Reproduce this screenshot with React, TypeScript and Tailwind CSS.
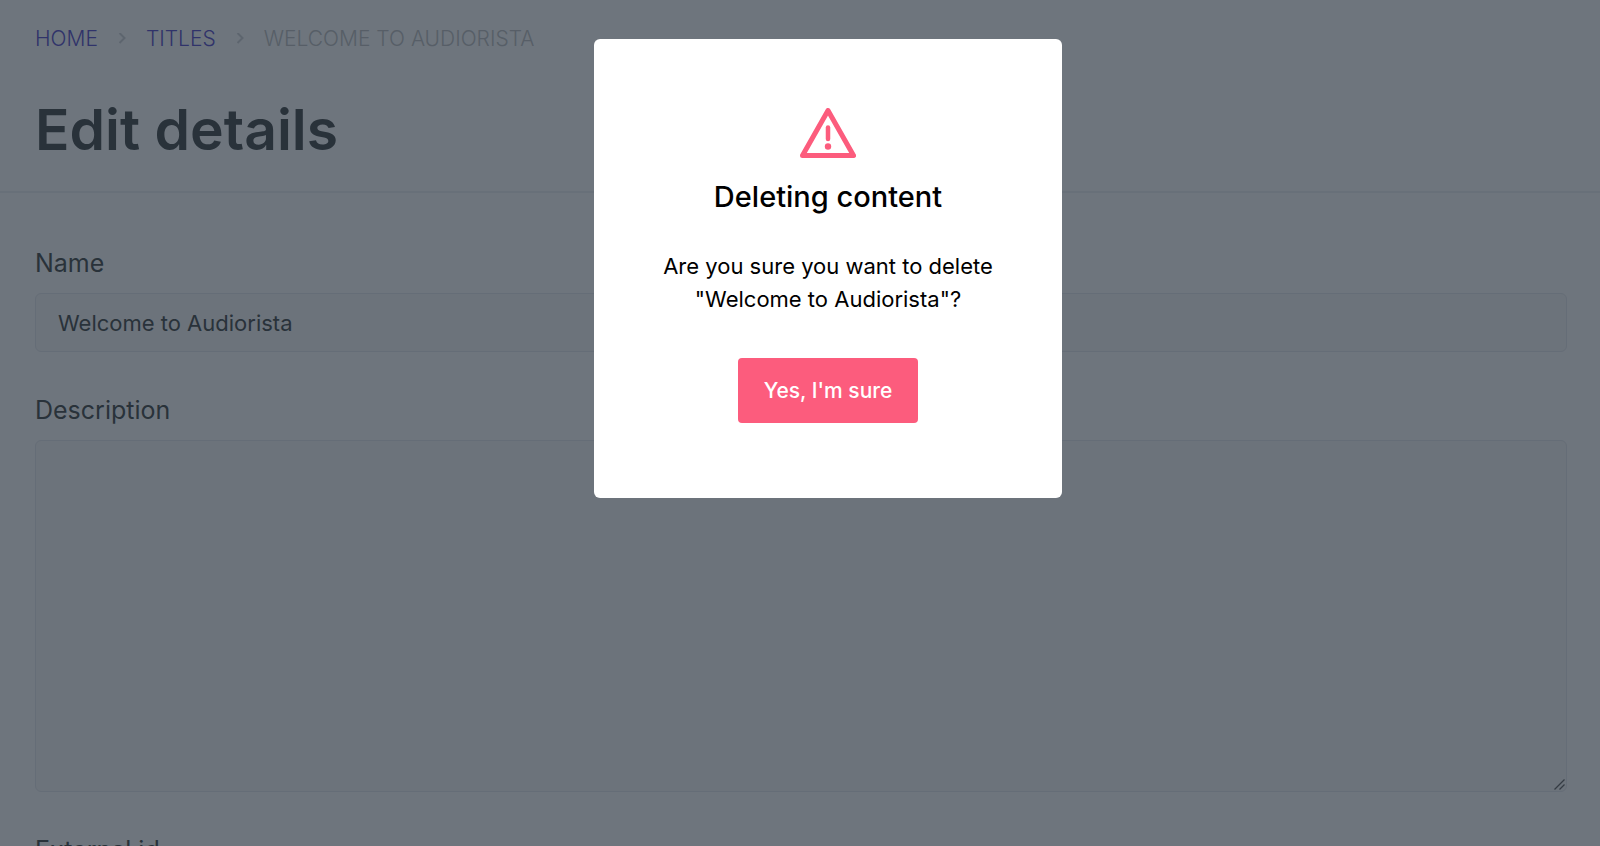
import { useState } from "react";

function Chevron() {
  return (
    <svg viewBox="0 0 8 12" className="w-2 h-3" fill="none" stroke="#cfd1d5" strokeWidth="2" aria-hidden="true">
      <path d="M1.5 0l5 5-5 5" />
    </svg>
  );
}

function WarningIcon() {
  return (
    <svg viewBox="0 0 56 50" className="w-14 h-[50px]" fill="none" stroke="#fc5c7d" aria-hidden="true">
      <path d="M28 2.5L53.5 47.5H2.5z" strokeWidth="5" strokeLinejoin="round" />
      <path d="M28 19.5V31" strokeWidth="4.5" strokeLinecap="round" />
      <circle cx="28" cy="38.5" r="3.2" fill="#fc5c7d" stroke="none" />
    </svg>
  );
}

const labelClass = "block text-[25px] leading-8 text-[#3a3f40]";
const fieldClass =
  "block w-full rounded-md border border-[#e5e7ed] bg-[#f8f8f8] px-[22px] text-[22px] text-[#3a3f40] outline-none";

export default function App() {
  const [name, setName] = useState("Welcome to Audiorista");
  const [description, setDescription] = useState("");
  const [externalId, setExternalId] = useState("");
  const [open, setOpen] = useState(true);

  return (
    <div className="h-screen overflow-hidden bg-white font-['Inter',sans-serif]">
      <header className="border-b-2 border-[#eeeff2] px-[35px] pt-6 pb-[26px]">
        <nav aria-label="Breadcrumb" className="flex items-center gap-5 text-[21px] leading-[30px] font-light uppercase">
          <a href="#home" className="text-[#4f44c8]">Home</a>
          <Chevron />
          <a href="#titles" className="text-[#4f44c8]">Titles</a>
          <Chevron />
          <span className="text-[#bcbec0]">{name}</span>
        </nav>
        <h1 className="mt-10 text-[57px] leading-[71px] font-semibold text-[#3a3f40]">Edit details</h1>
      </header>

      <form className="flex flex-col gap-[42px] pt-[54px] pr-[33px] pl-[35px]">
        <div>
          <label htmlFor="name" className={labelClass}>Name</label>
          <input
            id="name"
            type="text"
            value={name}
            onChange={(e) => setName(e.target.value)}
            className={`${fieldClass} mt-3.5 h-[59px]`}
          />
        </div>
        <div>
          <label htmlFor="description" className={labelClass}>Description</label>
          <div className="relative mt-3.5">
            <textarea
              id="description"
              value={description}
              onChange={(e) => setDescription(e.target.value)}
              className={`${fieldClass} h-[352px] resize-y py-4 [&::-webkit-resizer]:hidden`}
            />
            {/* resize grip */}
            <svg
              viewBox="0 0 11 11"
              className="pointer-events-none absolute right-0.5 bottom-0.5 size-[11px]"
              stroke="#5a5a5a"
              strokeWidth="1.3"
              aria-hidden="true"
            >
              <path d="M.5 10.5l10-10M5.5 10.5l5-5" />
            </svg>
          </div>
        </div>
        <div>
          <label htmlFor="external-id" className={labelClass}>External id</label>
          <input
            id="external-id"
            type="text"
            value={externalId}
            onChange={(e) => setExternalId(e.target.value)}
            className={`${fieldClass} mt-3.5 h-[59px]`}
          />
        </div>
      </form>

      {open && (
        <div className="fixed inset-0 flex items-start justify-center bg-[#202b37]/65 pt-[39px] pl-14">
          <div
            role="dialog"
            aria-modal="true"
            aria-labelledby="dialog-title"
            className="flex w-[468px] flex-col items-center rounded-md bg-white px-12 pt-[69px] pb-[75px] text-center text-black"
          >
            <WarningIcon />
            <h2 id="dialog-title" className="mt-[21px] text-[29px] leading-9 font-medium">Deleting content</h2>
            <p className="mt-[35px] text-[22px] leading-[33px]">
              {`Are you sure you want to delete "${name}"?`}
            </p>
            <button
              type="button"
              onClick={() => setOpen(false)}
              className="mt-[42px] h-[65px] rounded-sm bg-[#fc5c7d] px-[26px] text-[21px] font-medium text-white"
            >
              Yes, I'm sure
            </button>
          </div>
        </div>
      )}
    </div>
  );
}
